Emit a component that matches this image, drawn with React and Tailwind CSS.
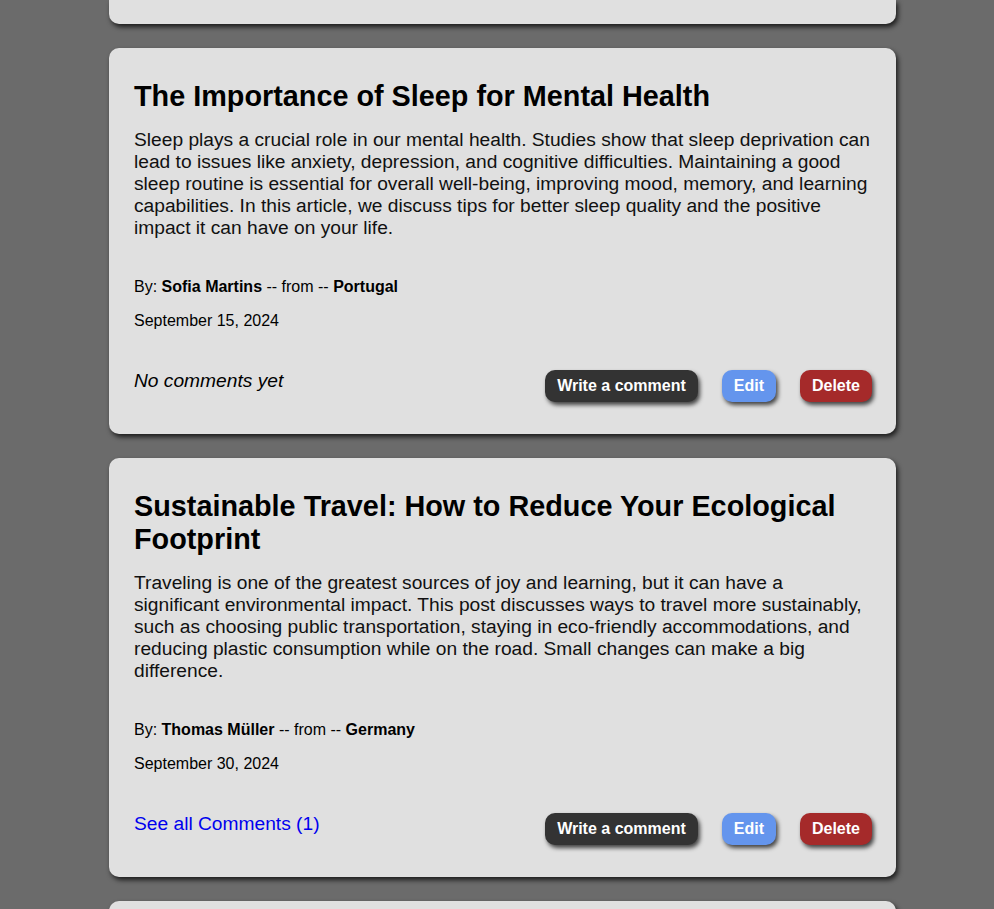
import React from "react";

const posts = [
  {
    title: "The Importance of Sleep for Mental Health",
    body: "Sleep plays a crucial role in our mental health. Studies show that sleep deprivation can lead to issues like anxiety, depression, and cognitive difficulties. Maintaining a good sleep routine is essential for overall well-being, improving mood, memory, and learning capabilities. In this article, we discuss tips for better sleep quality and the positive impact it can have on your life.",
    author: "Sofia Martins",
    country: "Portugal",
    date: "September 15, 2024",
    comments: 0,
  },
  {
    title: "Sustainable Travel: How to Reduce Your Ecological Footprint",
    body: "Traveling is one of the greatest sources of joy and learning, but it can have a significant environmental impact. This post discusses ways to travel more sustainably, such as choosing public transportation, staying in eco-friendly accommodations, and reducing plastic consumption while on the road. Small changes can make a big difference.",
    author: "Thomas Müller",
    country: "Germany",
    date: "September 30, 2024",
    comments: 1,
  },
];

const cardCls =
  "w-[787px] bg-[#e0e0e0] rounded-[10px] shadow-[2px_3px_5px_rgba(0,0,0,0.75)]";

function Post({ p }) {
  return (
    <div className={`${cardCls} pl-[25px] pr-[24px] pt-[32px] pb-[32px]`}>
      <h2 className="text-[28.8px] leading-[33px] font-bold text-black">{p.title}</h2>
      <p className="mt-[16px] pr-[1px] text-[19.2px] leading-[22px] text-[#111]">{p.body}</p>
      <p className="mt-[39px] text-[16px] leading-[18px] text-black">
        By: <span className="font-bold">{p.author}</span> -- from --{" "}
        <span className="font-bold">{p.country}</span>
      </p>
      <p className="mt-[16px] text-[16px] leading-[18px] text-black">{p.date}</p>
      <div className="mt-[40px] flex items-start justify-between">
        {p.comments === 0 ? (
          <span className="text-[19.2px] leading-[22px] italic text-black">No comments yet</span>
        ) : (
          <span className="text-[19.2px] leading-[22px] text-[#0000ee] cursor-pointer">
            See all Comments ({p.comments})
          </span>
        )}
        <div className="flex gap-[24px]">
          <button className="h-[32px] px-[12px] rounded-[10px] bg-[#333333] text-white font-bold text-[16px] shadow-[2px_3px_4px_rgba(0,0,0,0.7)]">
            Write a comment
          </button>
          <button className="h-[32px] px-[12px] rounded-[10px] bg-[#6495ed] text-white font-bold text-[16px] shadow-[2px_3px_4px_rgba(0,0,0,0.7)]">
            Edit
          </button>
          <button className="h-[32px] px-[12px] rounded-[10px] bg-[#a52a2a] text-white font-bold text-[16px] shadow-[2px_3px_4px_rgba(0,0,0,0.7)]">
            Delete
          </button>
        </div>
      </div>
    </div>
  );
}

export default function App() {
  return (
    <div
      className="h-[909px] overflow-hidden bg-[#6b6b6b]"
      style={{ fontFamily: '"Liberation Sans", Arial, sans-serif' }}
    >
      <div className="flex flex-col items-start gap-[24px] pl-[109px]">
        <div className={`${cardCls} h-[24px] rounded-t-none`} />
        {posts.map((p) => (
          <Post key={p.title} p={p} />
        ))}
        <div className={`${cardCls} h-[60px]`} />
      </div>
    </div>
  );
}
